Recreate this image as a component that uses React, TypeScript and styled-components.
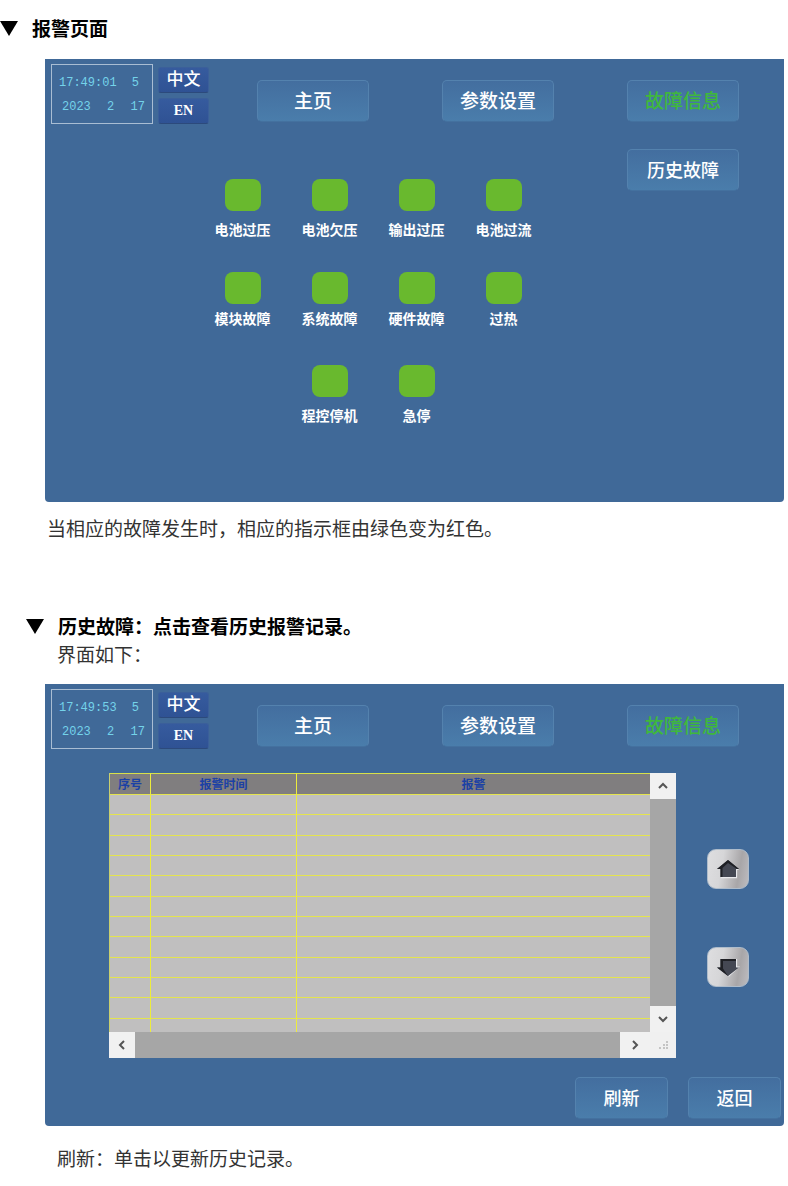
import React from "react";
import styled, { createGlobalStyle } from "styled-components";

const GlobalStyle = createGlobalStyle`
  *, *::before, *::after { box-sizing: border-box; }
  body {
    margin: 0;
    background: #ffffff;
    color: #333333;
    font-family: "Noto Sans CJK SC", "Noto Sans", sans-serif;
  }
  button { font-family: inherit; cursor: pointer; }
`;

const Page = styled.main`
  padding: 14px 4px 14px 0;
`;

const Heading = styled.h2<{ $indent?: boolean }>`
  display: flex;
  align-items: center;
  gap: 14px;
  margin: 0;
  padding-left: ${(p) => (p.$indent ? "26px" : "0")};
  font-size: 19px;
  line-height: 28px;
  font-weight: 700;
  color: #000000;
`;

const Marker = styled.svg`
  flex: none;
  width: 18px;
  height: 15px;
`;

const Section = styled.section<{ $spaced?: boolean }>`
  margin-top: ${(p) => (p.$spaced ? "70px" : "0")};
`;

const Paragraph = styled.p<{ $top: number; $left: number }>`
  margin: ${(p) => p.$top}px 0 0;
  padding-left: ${(p) => p.$left}px;
  font-size: 19px;
  line-height: 28px;
`;

const Panel = styled.div<{ $top: number; $bottom: number }>`
  margin: ${(p) => p.$top}px 0 0 45px;
  padding-bottom: ${(p) => p.$bottom}px;
  background: #406998;
  border-radius: 0 0 4px 4px;
`;

const PanelHeader = styled.header`
  display: flex;
  align-items: flex-start;
  padding: 5px 45px 0 6px;
`;

const Clock = styled.div`
  flex: none;
  width: 102px;
  height: 60px;
  padding: 6px 7px;
  border: 1px solid #a9bdd3;
  color: #74d3ea;
  font-family: "Liberation Mono", monospace;
  font-size: 12px;
  line-height: 24px;
`;

const ClockLine = styled.div<{ $inset?: boolean }>`
  display: flex;
  justify-content: space-between;
  padding: ${(p) => (p.$inset ? "0 0 0 3px" : "0 6px 0 0")};
`;

const Languages = styled.div`
  flex: none;
  display: flex;
  flex-direction: column;
  gap: 5px;
  margin: 3px 48px 0 5px;
`;

const LanguageButton = styled.button<{ $latin?: boolean }>`
  width: 51px;
  height: 26px;
  padding: 0;
  border: 1px solid #3b5f9a;
  border-bottom-color: #2c4a7c;
  border-radius: 3px;
  background: linear-gradient(#365b9e, #2f5294);
  color: #ffffff;
  font-family: "Liberation Serif", "Noto Sans CJK SC", serif;
  font-size: ${(p) => (p.$latin ? "14px" : "17px")};
  font-weight: ${(p) => (p.$latin ? 700 : 500)};
  line-height: 24px;
`;

const Nav = styled.nav`
  flex: 1;
  display: flex;
  justify-content: space-between;
  margin-top: 16px;
`;

const KeyButton = styled.button<{ $active?: boolean; $small?: boolean; $narrow?: boolean }>`
  width: ${(p) => (p.$narrow ? "93px" : "112px")};
  height: 42px;
  padding: 0 0 2px;
  border: 1px solid #5482ae;
  border-bottom-color: #44719f;
  border-radius: 5px;
  background: linear-gradient(#436e9f, #4a7dab);
  color: ${(p) => (p.$active ? "#3fb83c" : "#ffffff")};
  font-size: ${(p) => (p.$narrow || p.$small ? "18px" : "19px")};
  font-weight: 500;
  line-height: 38px;
`;

const AlarmBody = styled.div`
  display: flex;
  align-items: flex-start;
  justify-content: space-between;
  margin-top: 25px;
  padding: 0 45px 0 154px;
`;

const Lamps = styled.div`
  display: flex;
  flex-direction: column;
  gap: 31px;
  padding-top: 30px;
`;

const LampRow = styled.ul`
  display: flex;
  justify-content: center;
  height: 62px;
  margin: 0;
  padding: 0;
  list-style: none;
`;

const Lamp = styled.li<{ $tight?: boolean }>`
  display: flex;
  flex-direction: column;
  align-items: center;
  gap: ${(p) => (p.$tight ? "4px" : "8px")};
  width: 87px;
  color: #ffffff;
  font-size: 14px;
  font-weight: 700;
  line-height: 20px;
`;

const LampLight = styled.span`
  width: 36px;
  height: 32px;
  border-radius: 8px;
  background: #69b92e;
`;

const HistoryBody = styled.div`
  display: flex;
  align-items: flex-start;
  gap: 31px;
  margin-top: 24px;
  padding: 0 35px 0 64px;
`;

const Grid = styled.div`
  flex: 1;
  display: grid;
  grid-template-columns: 1fr 26px;
  grid-template-rows: 259px 26px;
  background: #f0f0f0;
`;

const TableView = styled.div`
  overflow: hidden;
  background: #c0bfbf;
  border-left: 1px solid #c9cf70;
`;

const Table = styled.table`
  width: 100%;
  table-layout: fixed;
  border-collapse: separate;
  border-spacing: 0;
  color: #1b41a5;
  font-size: 12px;

  th, td {
    height: 20px;
    padding: 0;
    border-bottom: 1px solid #e4e44e;
    border-right: 1px solid #ecec3c;
  }
  th {
    height: 22px;
    border-top: 1px solid #d8e04a;
    background: #807e7f;
    font-weight: 700;
    line-height: 18px;
  }
  th:last-child, td:last-child { border-right: 0; }
  tbody tr:nth-child(3n + 2) td { height: 21px; }
`;

const NumberCol = styled.col`
  width: 41px;
`;

const TimeCol = styled.col`
  width: 146px;
`;

const ScrollTrack = styled.div<{ $horizontal?: boolean }>`
  display: flex;
  flex-direction: ${(p) => (p.$horizontal ? "row" : "column")};
  justify-content: space-between;
  background: #a6a6a6;
`;

const ScrollButton = styled.button<{ $wide?: boolean }>`
  display: grid;
  place-items: center;
  width: ${(p) => (p.$wide ? "30px" : "26px")};
  height: 26px;
  padding: 0;
  border: 0;
  background: #f1f1f1;
`;

const Grip = styled.svg`
  place-self: center;
`;

const Pager = styled.div`
  flex: none;
  display: flex;
  flex-direction: column;
  gap: 58px;
  padding-top: 76px;
`;

const PagerButton = styled.button`
  display: grid;
  place-items: center;
  width: 42px;
  height: 40px;
  padding: 0;
  border: 1px solid #aebccb;
  border-radius: 9px;
  background: linear-gradient(100deg, #dedee0 0%, #d6d6d8 35%, #a8a6a8 75%, #bdbcc0 100%);
`;

const PanelFooter = styled.footer`
  display: flex;
  justify-content: flex-end;
  gap: 20px;
  margin-top: 19px;
  padding-right: 3px;
`;

type Direction = "up" | "down" | "left" | "right";

const chevrons: Record<Direction, string> = {
  up: "M2 8 L6 4 L10 8",
  down: "M2 4 L6 8 L10 4",
  left: "M8 2 L4 6 L8 10",
  right: "M4 2 L8 6 L4 10",
};

const Chevron = ({ to }: { to: Direction }) => (
  <svg width="12" height="12" viewBox="0 0 12 12" aria-hidden="true">
    <path d={chevrons[to]} fill="none" stroke="#555555" strokeWidth="2" />
  </svg>
);

const ArrowUp = () => (
  <svg width="24" height="20" viewBox="0 0 24 20" aria-hidden="true">
    <path d="M22.500 10.500 H20.500 V18.700 H5" fill="none" stroke="#e9e9ec" strokeWidth="1.200" />
    <path d="M12 1 L23 10 H20 V18 H4.500 V10 H1 Z" fill="#454853" />
    <path d="M12 1 L1 10 H4.500 V18 H6.500 V9 L12 4 L21 10 H23 Z" fill="#1f2025" />
  </svg>
);

const ArrowDown = () => (
  <svg width="24" height="20" viewBox="0 0 24 20" aria-hidden="true">
    <path d="M20.500 2 V10 H22.500 L12.500 19.200" fill="none" stroke="#e9e9ec" strokeWidth="1.200" />
    <path d="M4.500 2 H20 V10.500 H23 L12 19 L1 10.500 H4.500 Z" fill="#454853" />
    <path d="M4.500 2 H20 V4 H7 V11.500 L12 19 L1 10.500 H4.500 Z" fill="#1f2025" />
  </svg>
);

const SectionHeading = ({ indent, children }: { indent?: boolean; children: React.ReactNode }) => (
  <Heading $indent={indent}>
    <Marker viewBox="0 0 18 15" aria-hidden="true">
      <path d="M0 0 H18 L9 15 Z" fill="#000000" />
    </Marker>
    {children}
  </Heading>
);

const ControlBar = ({ time }: { time: string }) => (
  <PanelHeader>
    <Clock>
      <ClockLine>
        <span>{time}</span>
        <span>5</span>
      </ClockLine>
      <ClockLine $inset>
        <span>2023</span>
        <span>2</span>
        <span>17</span>
      </ClockLine>
    </Clock>
    <Languages>
      <LanguageButton type="button">中文</LanguageButton>
      <LanguageButton type="button" $latin>EN</LanguageButton>
    </Languages>
    <Nav>
      <KeyButton type="button">主页</KeyButton>
      <KeyButton type="button">参数设置</KeyButton>
      <KeyButton type="button" $active>故障信息</KeyButton>
    </Nav>
  </PanelHeader>
);

const lampRows = [
  { tight: false, labels: ["电池过压", "电池欠压", "输出过压", "电池过流"] },
  { tight: true, labels: ["模块故障", "系统故障", "硬件故障", "过热"] },
  { tight: false, labels: ["程控停机", "急停"] },
];

const emptyRows = Array.from({ length: 12 }, (_, i) => i);

export default function App() {
  return (
    <>
      <GlobalStyle />
      <Page>
        <Section>
          <SectionHeading>报警页面</SectionHeading>
          <Panel $top={17} $bottom={75}>
            <ControlBar time="17:49:01" />
            <AlarmBody>
              <Lamps>
                {lampRows.map((row) => (
                  <LampRow key={row.labels[0]}>
                    {row.labels.map((label) => (
                      <Lamp key={label} $tight={row.tight}>
                        <LampLight />
                        {label}
                      </Lamp>
                    ))}
                  </LampRow>
                ))}
              </Lamps>
              <KeyButton type="button" $small>历史故障</KeyButton>
            </AlarmBody>
          </Panel>
          <Paragraph $top={12} $left={47}>当相应的故障发生时，相应的指示框由绿色变为红色。</Paragraph>
        </Section>

        <Section $spaced>
          <SectionHeading indent>历史故障：点击查看历史报警记录。</SectionHeading>
          <Paragraph $top={0} $left={57}>界面如下：</Paragraph>
          <Panel $top={16} $bottom={7}>
            <ControlBar time="17:49:53" />
            <HistoryBody>
              <Grid>
                <TableView>
                  <Table>
                    <colgroup>
                      <NumberCol />
                      <TimeCol />
                      <col />
                    </colgroup>
                    <thead>
                      <tr>
                        <th scope="col">序号</th>
                        <th scope="col">报警时间</th>
                        <th scope="col">报警</th>
                      </tr>
                    </thead>
                    <tbody>
                      {emptyRows.map((i) => (
                        <tr key={i}>
                          <td />
                          <td />
                          <td />
                        </tr>
                      ))}
                    </tbody>
                  </Table>
                </TableView>
                <ScrollTrack>
                  <ScrollButton type="button" aria-label="向上滚动"><Chevron to="up" /></ScrollButton>
                  <ScrollButton type="button" aria-label="向下滚动"><Chevron to="down" /></ScrollButton>
                </ScrollTrack>
                <ScrollTrack $horizontal>
                  <ScrollButton type="button" aria-label="向左滚动"><Chevron to="left" /></ScrollButton>
                  <ScrollButton type="button" $wide aria-label="向右滚动"><Chevron to="right" /></ScrollButton>
                </ScrollTrack>
                <Grip width="10" height="10" viewBox="0 0 10 10" aria-hidden="true">
                  <path d="M8 1h2v2h-2z M8 4h2v2h-2z M8 7h2v2h-2z M5 4h2v2h-2z M5 7h2v2h-2z M1 7h2v2h-2z" fill="#c4c4c4" />
                </Grip>
              </Grid>
              <Pager>
                <PagerButton type="button" aria-label="上一页"><ArrowUp /></PagerButton>
                <PagerButton type="button" aria-label="下一页"><ArrowDown /></PagerButton>
              </Pager>
            </HistoryBody>
            <PanelFooter>
              <KeyButton type="button" $narrow>刷新</KeyButton>
              <KeyButton type="button" $narrow>返回</KeyButton>
            </PanelFooter>
          </Panel>
          <Paragraph $top={18} $left={57}>刷新：单击以更新历史记录。</Paragraph>
        </Section>
      </Page>
    </>
  );
}
